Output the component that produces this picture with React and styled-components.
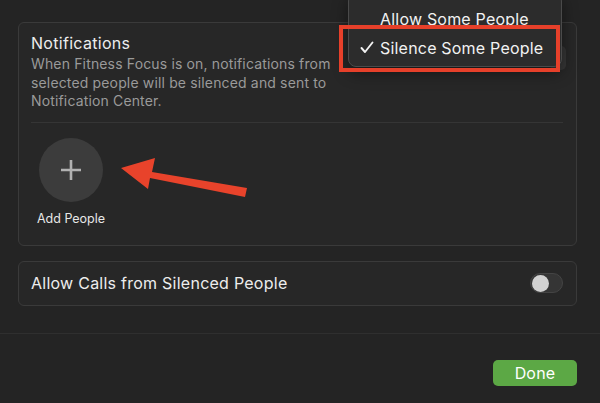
import React from "react";
import styled, { createGlobalStyle } from "styled-components";

const Global = createGlobalStyle`
  html, body { margin: 0; padding: 0; background: #242424; }
  body { width: 600px; height: 403px; overflow: hidden; font-family: Inter, "Noto Sans", "Liberation Sans", sans-serif; -webkit-font-smoothing: antialiased; }
  * { box-sizing: border-box; }
`;

const Page = styled.div`
  position: relative;
  width: 600px;
  height: 403px;
  background: #242424;
  padding-top: 22px;
  display: flex;
  flex-direction: column;
`;

const Card = styled.section`
  position: relative;
  margin: 0 23px 0 18px;
  border: 1px solid #3a3a3a;
  border-radius: 6px;
  background: #272727;
  padding: ${(p) => p.$pad};
  height: ${(p) => p.$h || "auto"};
  margin-top: ${(p) => p.$mt || "0"};
  display: flex;
  flex-direction: ${(p) => p.$dir || "column"};
  align-items: ${(p) => p.$align || "stretch"};
  justify-content: space-between;
`;

const Header = styled.div`
  display: flex;
  justify-content: space-between;
  align-items: flex-start;
`;

const Title = styled.div`
  color: #ededed;
  font-size: 16px;
  letter-spacing: 0.3px;
  line-height: 20px;
`;

const Desc = styled.div`
  margin-top: 2px;
  color: #9a9a9a;
  font-size: 14px;
  letter-spacing: 0.15px;
  line-height: 18.5px;
`;

const SelectStub = styled.div`
  margin-top: 13px;
  width: 16px;
  height: 24px;
  border-radius: 5px;
  background: #363636;
  margin-right: -3px;
`;

const Divider = styled.div`
  height: 1px;
  background: #353535;
  margin-top: 11px;
`;

const PeopleRow = styled.div`
  position: relative;
  display: flex;
  padding-top: 15px;
  padding-bottom: 18px;
`;

const AddPeople = styled.div`
  width: 80px;
  display: flex;
  flex-direction: column;
  align-items: center;
`;

const Circle = styled.div`
  width: 64px;
  height: 64px;
  border-radius: 50%;
  background: #3c3c3c;
  display: flex;
  align-items: center;
  justify-content: center;
`;

const Label = styled.div`
  margin-top: 9px;
  color: #e6e6e6;
  font-size: 12.5px;
  line-height: 16px;
`;

const Arrow = styled.svg`
  position: absolute;
  left: 0;
  top: 0;
  overflow: visible;
`;

const RowText = styled.div`
  color: #ededed;
  font-size: 16px;
  letter-spacing: 0.25px;
`;

const Toggle = styled.div`
  width: 33px;
  height: 20px;
  border-radius: 10px;
  background: #353535;
  border: 1px solid #444;
  display: flex;
  align-items: center;
  padding: 0 1px;
`;

const Knob = styled.div`
  width: 17px;
  height: 17px;
  border-radius: 50%;
  background: #d2d2d2;
`;

const Separator = styled.div`
  height: 1px;
  background: #2f2f2f;
  margin-top: 27px;
`;

const Footer = styled.div`
  display: flex;
  justify-content: flex-end;
  padding: 26px 23px 0 0;
`;

const DoneButton = styled.button`
  width: 84px;
  height: 26px;
  border: none;
  border-radius: 5px;
  background: #5ca845;
  color: #fff;
  font-family: inherit;
  font-size: 16px;
  letter-spacing: 0.2px;
  padding: 0;
`;

const Popup = styled.div`
  position: absolute;
  left: 348px;
  top: -7px;
  width: 214px;
  padding: 10px 0 4px;
  background: #2c2c2c;
  border: 1px solid #4a4a4a;
  border-radius: 8px;
  box-shadow: 0 6px 16px rgba(0, 0, 0, 0.45);
`;

const MenuItem = styled.div`
  height: 29px;
  display: flex;
  align-items: center;
  padding-left: 11px;
  color: #f2f2f2;
  font-size: 16px;
  letter-spacing: 0.2px;
`;

const Check = styled.span`
  width: 20px;
  display: flex;
  align-items: center;
`;

const Highlight = styled.div`
  position: absolute;
  left: 339px;
  top: 25px;
  width: 221px;
  height: 47px;
  border: 4px solid #e6402a;
`;

export default function App() {
  return (
    <>
      <Global />
      <Page>
        <Card $pad="10px 13px 0 12px">
          <Header>
            <div>
              <Title>Notifications</Title>
              <Desc>
                When Fitness Focus is on, notifications from
                <br />
                selected people will be silenced and sent to
                <br />
                Notification Center.
              </Desc>
            </div>
            <SelectStub />
          </Header>
          <Divider />
          <PeopleRow>
            <AddPeople>
              <Circle>
                <svg width="22" height="22" viewBox="0 0 22 22">
                  <path d="M11 1v20M1 11h20" stroke="#b2b2b2" strokeWidth="2.6" />
                </svg>
              </Circle>
              <Label>Add People</Label>
            </AddPeople>
            <Arrow width="1" height="1">
              <polygon
                points="90,45 124,35 121,49 216,65 214,74 119,55 117,66"
                fill="#e8432b"
              />
            </Arrow>
          </PeopleRow>
        </Card>
        <Card $pad="0 13px 0 12px" $h="45px" $mt="15px" $dir="row" $align="center">
          <RowText>Allow Calls from Silenced People</RowText>
          <Toggle>
            <Knob />
          </Toggle>
        </Card>
        <Separator />
        <Footer>
          <DoneButton>Done</DoneButton>
        </Footer>
        <Popup>
          <MenuItem>
            <Check />
            Allow Some People
          </MenuItem>
          <MenuItem>
            <Check>
              <svg width="14" height="13" viewBox="0 0 14 13">
                <path d="M1.5 7 L5 11 L12.5 1.5" fill="none" stroke="#f2f2f2" strokeWidth="1.9" strokeLinecap="round" strokeLinejoin="round" />
              </svg>
            </Check>
            Silence Some People
          </MenuItem>
        </Popup>
        <Highlight />
      </Page>
    </>
  );
}
